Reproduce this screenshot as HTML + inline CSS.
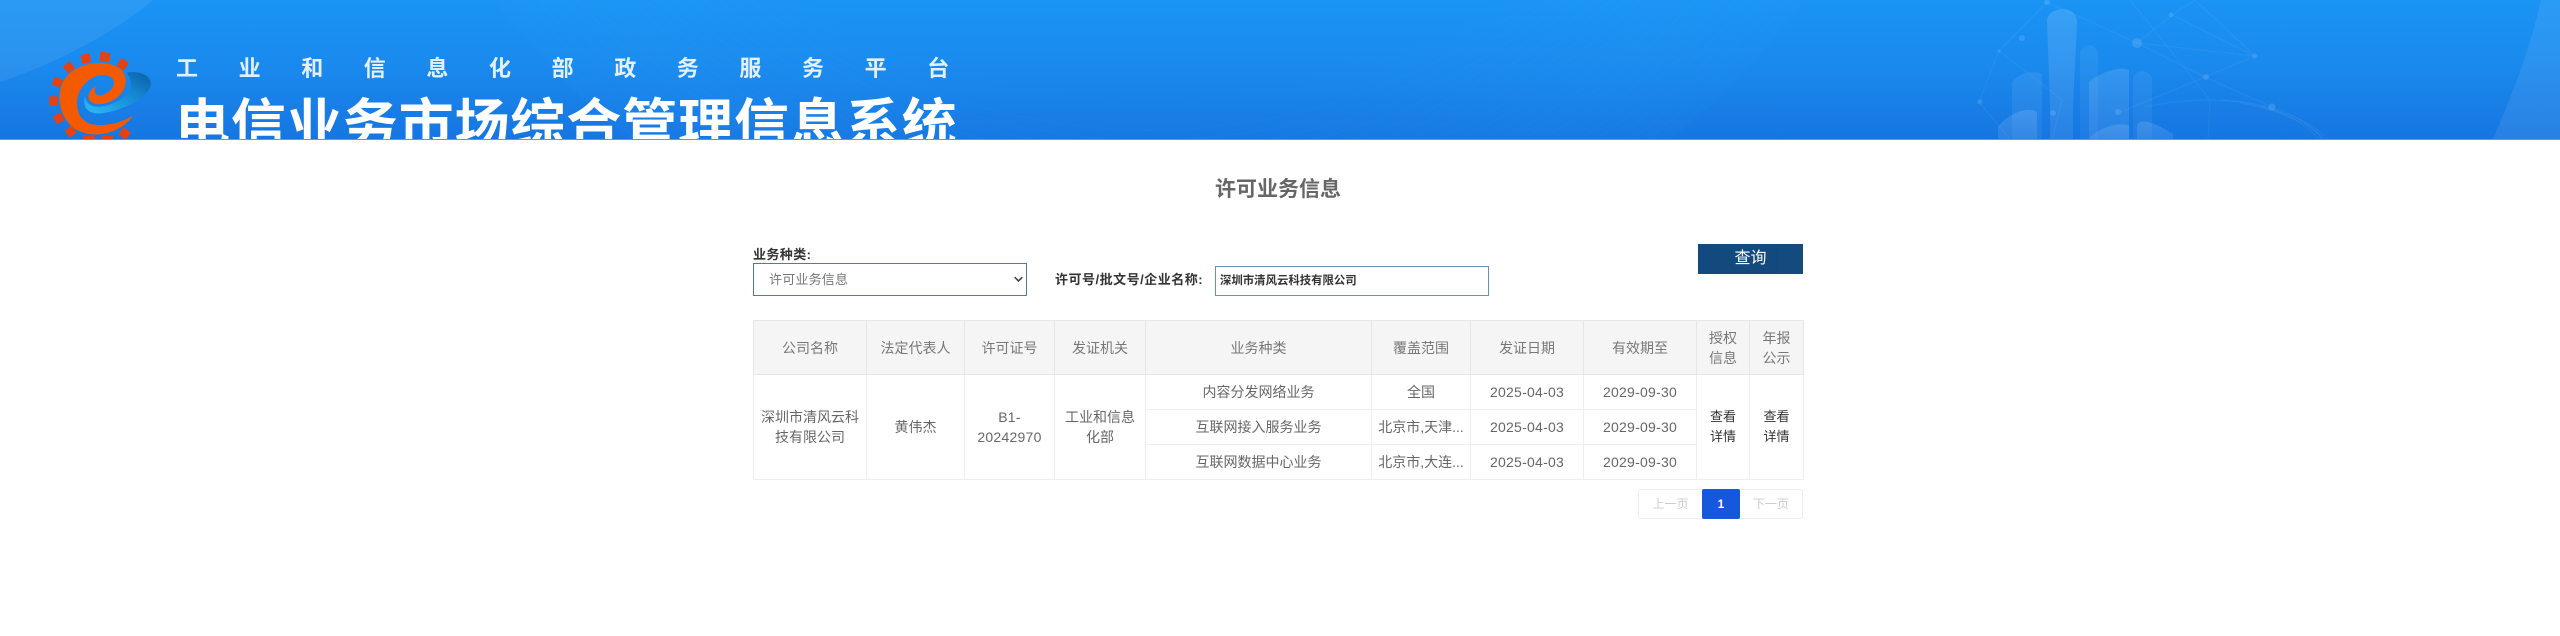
<!DOCTYPE html>
<html lang="zh">
<head>
<meta charset="utf-8">
<title>许可业务信息</title>
<style>
*{box-sizing:border-box}
html,body{margin:0;padding:0;width:2560px;height:636px;overflow:hidden;background:#fff;font-family:"Liberation Sans","Noto Sans CJK SC",sans-serif;color:#666}
.abs{position:absolute}
#banner{position:absolute;left:0;top:0;width:2560px;height:140px;overflow:hidden;background:linear-gradient(180deg,#1a94f5 0%,#1a8aee 45%,#1676e1 100%);border-bottom:1px solid #4aa0f0}
#sub{position:absolute;left:176px;top:52px;font:700 22px/30px "Noto Sans CJK SC",sans-serif;letter-spacing:40.6px;color:#fff;white-space:nowrap;opacity:.88}
#main{position:absolute;left:175px;top:90px;font:700 55px/60px "Noto Sans CJK SC",sans-serif;letter-spacing:.9px;color:#fff;white-space:nowrap}
#title{position:absolute;left:1098px;width:360px;top:175px;text-align:center;font:700 21px/30px "Liberation Sans","Noto Sans CJK SC",sans-serif;color:#666}
.lbl{position:absolute;font:700 13px/18px "Liberation Sans","Noto Sans CJK SC",sans-serif;color:#333;white-space:nowrap}
#sel{position:absolute;left:753px;top:263px;width:274px;height:33px;border:1px solid #4f7ba3;font-size:13px;line-height:31px;padding-left:15px;color:#777;letter-spacing:.2px}
#inp{position:absolute;left:1215px;top:266px;width:274px;height:30px;border:1px solid #6c90b0;font-weight:700;font-size:11.4px;line-height:28px;padding-left:4px;color:#333;white-space:nowrap}
#btn{position:absolute;left:1698px;top:244px;width:105px;height:30px;background:#0f477b;color:#fff;text-align:center;font-size:16px;line-height:30px;opacity:.98}
table{position:absolute;left:753px;top:320px;width:1050px;border-collapse:collapse;table-layout:fixed;font-size:14px;line-height:20px;color:#666}
td,th{border:1px solid #eee;text-align:center;vertical-align:middle;padding:0;font-weight:400}
th{background:#f5f5f5;border-color:#e6e6e6;height:54px;color:#777}
tbody td{height:35px}
td.dk{color:#333;font-size:13px}
.n{letter-spacing:.25px}
#pg{position:absolute;left:1638px;top:489px;width:165px;height:30px;border:1px solid #eee;border-radius:3px;font-size:12px;line-height:28px;color:#ccc}
#pg span{position:absolute;top:0;text-align:center}
#pg .on{left:63px;top:-1px;width:38px;height:30px;line-height:30px;background:#1558de;border-radius:2px;color:#fff;font-weight:700}
</style>
</head>
<body>
<div id="banner">
<svg class="abs" style="left:0;top:0" width="2560" height="139" viewBox="0 0 2560 139">
<defs>
<radialGradient id="wf" gradientUnits="userSpaceOnUse" cx="1150" cy="-500" r="825">
<stop offset="0" stop-color="#2aa8ff" stop-opacity="0"/><stop offset=".72" stop-color="#2aa8ff" stop-opacity=".03"/><stop offset=".9" stop-color="#2aa8ff" stop-opacity=".1"/><stop offset="1" stop-color="#2aa8ff" stop-opacity=".05"/>
</radialGradient>
<linearGradient id="tw" x1="0" y1="0" x2="0" y2="1"><stop offset="0" stop-color="#fff" stop-opacity=".13"/><stop offset="1" stop-color="#fff" stop-opacity=".08"/></linearGradient>
</defs>
<path d="M0 82C60 62 118 30 153 0H0Z" fill="#fff" opacity=".07"/>
<path d="M2541 0C2530 50 2510 100 2493 139H2560V0Z" fill="#fff" opacity=".08"/>
<circle cx="1150" cy="-500" r="825" fill="url(#wf)"/>
<g fill="none" stroke="#fff" stroke-opacity=".018">
<circle cx="1150" cy="-500" r="820"/><circle cx="1150" cy="-500" r="810"/><circle cx="1150" cy="-500" r="800"/><circle cx="1150" cy="-500" r="790"/><circle cx="1150" cy="-500" r="780"/><circle cx="1150" cy="-500" r="770"/><circle cx="1150" cy="-500" r="760"/><circle cx="1150" cy="-500" r="750"/><circle cx="1150" cy="-500" r="740"/><circle cx="1150" cy="-500" r="730"/><circle cx="1150" cy="-500" r="720"/><circle cx="1150" cy="-500" r="710"/><circle cx="1150" cy="-500" r="700"/><circle cx="1150" cy="-500" r="690"/><circle cx="1150" cy="-500" r="680"/><circle cx="1150" cy="-500" r="670"/><circle cx="1150" cy="-500" r="660"/><circle cx="1150" cy="-500" r="650"/><circle cx="1150" cy="-500" r="640"/><circle cx="1150" cy="-500" r="630"/>
</g>
<g stroke="#fff" stroke-opacity=".06" fill="none">
<path d="M1979 102L1999 51L2047 2M1999 51L2062 100L2052 139M2047 2L2137 43L2172 15L2195 0M2137 43L2255 56L2205 77L2137 105L2120 112M2172 15L2255 56M2195 0L2255 56M2137 43L2205 77L2272 107M2130 0L2210 100L2208 139M1979 102L2010 139M2205 77L2120 112"/>
</g>
<g fill="#fff" fill-opacity=".12">
<circle cx="2137" cy="43" r="5"/><circle cx="2171" cy="15" r="2.5"/><circle cx="2255" cy="56" r="2.5"/><circle cx="2206" cy="77" r="3"/><circle cx="2272" cy="107" r="3.5"/><circle cx="1999" cy="51" r="1.5"/><circle cx="2022" cy="38" r="3"/><circle cx="1980" cy="102" r="2.5"/><circle cx="2047" cy="2" r="3"/><circle cx="2053" cy="113" r="3"/><circle cx="2118" cy="112" r="3"/>
</g>
<g fill="url(#tw)">
<path d="M2047 20C2049 6 2075 5 2077 20C2076 60 2072 100 2073 139H2050C2051 100 2048 60 2047 20Z"/>
<path d="M2080 55C2080 42 2098 42 2098 55V139H2080Z" opacity=".45"/>
<path d="M2012 82C2020 72 2034 70 2042 74V139H2012Z" opacity=".6"/>
<path d="M1998 127C2006 116 2026 105 2037 112V139H1998Z"/>
<path d="M2089 82C2100 72 2120 66 2129 70V139H2089Z" opacity=".9"/>
<path d="M2133 78C2136 68 2150 70 2152 78V139H2133Z" opacity=".5"/>
<path d="M2089 139C2100 125 2125 122 2129 126V139Z"/>
<path d="M2137 126C2140 118 2150 120 2173 134V139H2137Z"/>
</g>
<g fill="none" stroke="#fff" stroke-opacity=".06">
<path d="M2145 107C2200 95 2290 95 2322 139"/><path d="M2220 100C2270 104 2310 120 2328 139"/><path d="M2240 103C2280 110 2310 124 2324 139"/><path d="M2260 106C2290 114 2308 126 2318 139"/>
</g>
</svg>
<svg class="abs" style="left:30px;top:30px" width="170" height="109" viewBox="0 0 510 327">
<defs><linearGradient id="sw" x1="0" y1="1" x2="1" y2="0"><stop offset="0" stop-color="#2cbcf5"/><stop offset=".6" stop-color="#1488d2"/><stop offset="1" stop-color="#0b5fa5"/></linearGradient></defs>
<g fill="#e8400f">
<rect x="104" y="99" width="26" height="26" transform="rotate(-35 117 112)"/>
<rect x="154" y="72" width="27" height="27" transform="rotate(-12 167 85)"/>
<rect x="210" y="67" width="30" height="27" transform="rotate(8 225 80)"/>
<rect x="265" y="89" width="27" height="27" transform="rotate(35 278 102)"/>
<rect x="70" y="144" width="25" height="26" transform="rotate(-65 82 157)"/>
<rect x="58" y="199" width="25" height="26"/>
<rect x="73" y="252" width="26" height="26" transform="rotate(-30 86 265)"/>
<rect x="109" y="292" width="26" height="26" transform="rotate(-40 122 305)"/>
<rect x="160" y="316" width="34" height="26"/>
<rect x="215" y="316" width="34" height="26"/>
<rect x="271" y="297" width="27" height="27" transform="rotate(35 284 310)"/>
</g>
<path d="M290 128C335 120 372 142 360 172C345 208 280 240 215 250C180 254 155 235 165 200C172 228 192 234 225 228C282 215 325 175 290 128Z" fill="url(#sw)"/>
<path d="M310 256C270 312 190 330 135 297C85 262 72 182 112 137C152 95 235 85 275 120C300 150 285 197 240 215C215 226 185 227 175 205C174 190 185 175 197 168C190 185 197 202 217 195C247 185 265 155 240 140C205 122 152 155 142 205C135 258 165 285 205 285C245 287 280 274 310 256Z" fill="#f45a00"/>
</svg>
<div id="sub">工业和信息化部政务服务平台</div>
<div id="main">电信业务市场综合管理信息系统</div>
</div>

<div id="title">许可业务信息</div>
<div class="lbl" style="left:753px;top:246px;letter-spacing:.4px">业务种类:</div>
<div id="sel">许可业务信息
<svg class="abs" style="right:3px;top:12px" width="9" height="7" viewBox="0 0 9 7"><path d="M.7 1.2L4.5 5L8.3 1.2" fill="none" stroke="#444" stroke-width="1.6"/></svg>
</div>
<div class="lbl" style="left:1055px;top:271px;letter-spacing:.5px">许可号/批文号/企业名称:</div>
<div id="inp">深圳市清风云科技有限公司</div>
<div id="btn">查询</div>

<table>
<colgroup><col style="width:113px"><col style="width:98px"><col style="width:90px"><col style="width:91px"><col style="width:226px"><col style="width:99px"><col style="width:113px"><col style="width:113px"><col style="width:53px"><col style="width:54px"></colgroup>
<thead><tr><th>公司名称</th><th>法定代表人</th><th>许可证号</th><th>发证机关</th><th>业务种类</th><th>覆盖范围</th><th>发证日期</th><th>有效期至</th><th>授权<br>信息</th><th>年报<br>公示</th></tr></thead>
<tbody>
<tr><td rowspan="3">深圳市清风云科<br>技有限公司</td><td rowspan="3">黄伟杰</td><td rowspan="3" class="n">B1-<br>20242970</td><td rowspan="3">工业和信息<br>化部</td><td>内容分发网络业务</td><td>全国</td><td class="n">2025-04-03</td><td class="n">2029-09-30</td><td rowspan="3" class="dk">查看<br>详情</td><td rowspan="3" class="dk">查看<br>详情</td></tr>
<tr><td>互联网接入服务业务</td><td>北京市,天津...</td><td class="n">2025-04-03</td><td class="n">2029-09-30</td></tr>
<tr><td>互联网数据中心业务</td><td>北京市,大连...</td><td class="n">2025-04-03</td><td class="n">2029-09-30</td></tr>
</tbody>
</table>

<div id="pg"><span style="left:0;width:63px">上一页</span><span class="on">1</span><span style="left:101px;width:62px">下一页</span></div>
</body>
</html>
